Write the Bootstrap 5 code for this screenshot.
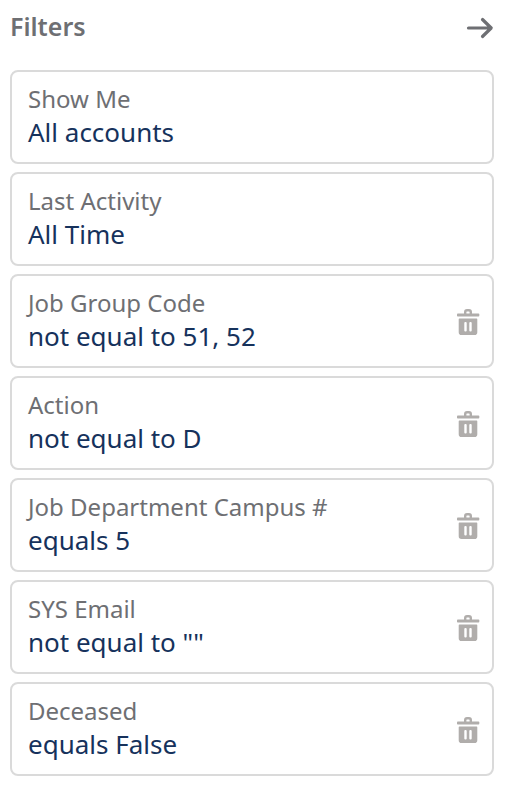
<!DOCTYPE html>
<html lang="en">
<head>
<meta charset="utf-8">
<meta name="viewport" content="width=device-width, initial-scale=1">
<title>Filters</title>
<link href="https://cdn.jsdelivr.net/npm/bootstrap@5.3.0/dist/css/bootstrap.min.css" rel="stylesheet">
<style>
  body { font-family: "Noto Sans", "Open Sans", sans-serif; background: #fff; }
  .filters-panel { padding: 10px 14px 12px 10px; }
  .panel-head { margin-bottom: 24px; }
  .panel-title { font-size: 25px; line-height: 32px; padding-bottom: 4px; font-weight: 600; color: #6e6f73; }
  .icon-button { line-height: 0; }
  .filter-list { gap: 8px; }
  .filter-item { border: 2px solid #dadada; border-radius: 8px; background: #fff; }
  .filter-open { padding: 10px 16px 14px; }
  .filter-label { font-size: 24px; line-height: 34px; color: #6e6f73; }
  .filter-value { font-size: 26px; line-height: 32px; color: #16325c; }
  .filter-remove { padding: 0 12px; }
</style>
</head>
<body>
<svg width="0" height="0" class="d-none" aria-hidden="true">
  <symbol id="trash" viewBox="0 0 24 28">
    <path d="M9.200 7V5a1.800 1.800 0 0 1 1.800-1.800h2a1.800 1.800 0 0 1 1.800 1.800v2" fill="none" stroke="#b0adab" stroke-width="2.400"/>
    <rect x="1" y="6.600" width="22.300" height="3" rx=".8" fill="#b0adab"/>
    <path fill="#b0adab" fill-rule="evenodd" d="M3.400 11.600h17.200a.7.700 0 0 1 .7.700v12.900a2.800 2.800 0 0 1-2.800 2.800H5.500a2.800 2.800 0 0 1-2.800-2.800V12.300a.7.700 0 0 1 .7-.7zM9.300 15a1 1 0 0 0-1 1v7.500a1 1 0 0 0 1 1h.4a1 1 0 0 0 1-1V16a1 1 0 0 0-1-1zM14.300 15a1 1 0 0 0-1 1v7.500a1 1 0 0 0 1 1h.4a1 1 0 0 0 1-1V16a1 1 0 0 0-1-1z"/>
  </symbol>
</svg>
<main class="filters-panel">
  <header class="panel-head d-flex align-items-center justify-content-between">
    <h1 class="panel-title mb-0">Filters</h1>
    <button type="button" class="icon-button btn p-0 border-0" aria-label="Close filters">
      <svg width="28" height="24" viewBox="0 0 28 24" fill="none" stroke="#6e6f73" stroke-width="3.200" stroke-linecap="round" stroke-linejoin="round"><path d="M2.500 12H25M16.500 3.500L25.200 12L16.500 20.500"/></svg>
    </button>
  </header>
  <ul class="filter-list list-unstyled d-flex flex-column m-0">
    <li class="filter-item d-flex align-items-center">
      <button type="button" class="filter-open btn border-0 text-start flex-grow-1"><span class="filter-label d-block">Show Me</span><span class="filter-value d-block">All accounts</span></button>
    </li>
    <li class="filter-item d-flex align-items-center">
      <button type="button" class="filter-open btn border-0 text-start flex-grow-1"><span class="filter-label d-block">Last Activity</span><span class="filter-value d-block">All Time</span></button>
    </li>
    <li class="filter-item d-flex align-items-center">
      <button type="button" class="filter-open btn border-0 text-start flex-grow-1"><span class="filter-label d-block">Job Group Code</span><span class="filter-value d-block">not equal to 51, 52</span></button>
      <button type="button" class="filter-remove icon-button btn border-0" aria-label="Remove Job Group Code"><svg width="24" height="28"><use href="#trash"/></svg></button>
    </li>
    <li class="filter-item d-flex align-items-center">
      <button type="button" class="filter-open btn border-0 text-start flex-grow-1"><span class="filter-label d-block">Action</span><span class="filter-value d-block">not equal to D</span></button>
      <button type="button" class="filter-remove icon-button btn border-0" aria-label="Remove Action"><svg width="24" height="28"><use href="#trash"/></svg></button>
    </li>
    <li class="filter-item d-flex align-items-center">
      <button type="button" class="filter-open btn border-0 text-start flex-grow-1"><span class="filter-label d-block">Job Department Campus #</span><span class="filter-value d-block">equals 5</span></button>
      <button type="button" class="filter-remove icon-button btn border-0" aria-label="Remove Job Department Campus #"><svg width="24" height="28"><use href="#trash"/></svg></button>
    </li>
    <li class="filter-item d-flex align-items-center">
      <button type="button" class="filter-open btn border-0 text-start flex-grow-1"><span class="filter-label d-block">SYS Email</span><span class="filter-value d-block">not equal to ""</span></button>
      <button type="button" class="filter-remove icon-button btn border-0" aria-label="Remove SYS Email"><svg width="24" height="28"><use href="#trash"/></svg></button>
    </li>
    <li class="filter-item d-flex align-items-center">
      <button type="button" class="filter-open btn border-0 text-start flex-grow-1"><span class="filter-label d-block">Deceased</span><span class="filter-value d-block">equals False</span></button>
      <button type="button" class="filter-remove icon-button btn border-0" aria-label="Remove Deceased"><svg width="24" height="28"><use href="#trash"/></svg></button>
    </li>
  </ul>
</main>
<script src="https://cdn.jsdelivr.net/npm/bootstrap@5.3.0/dist/js/bootstrap.bundle.min.js"></script>
</body>
</html>
